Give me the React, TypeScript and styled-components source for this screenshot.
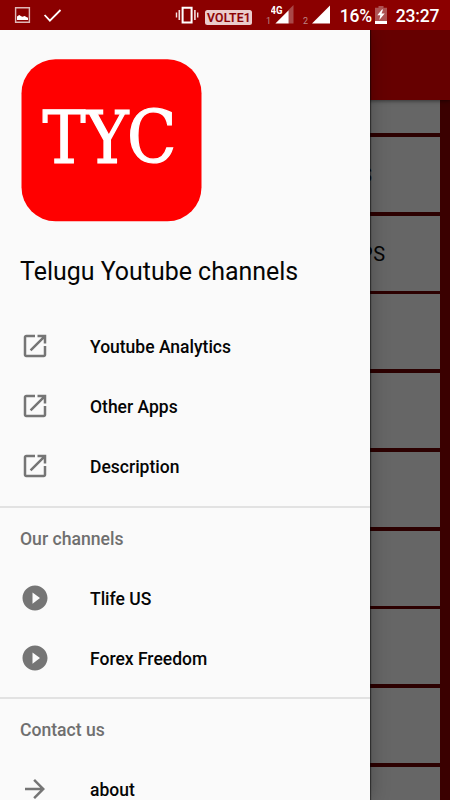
import React from "react";
import styled, { createGlobalStyle } from "styled-components";

const GlobalStyle = createGlobalStyle`
  *, *::before, *::after { box-sizing: border-box; }
  body { margin: 0; background: #3a0000; font-family: Roboto, sans-serif; }
`;

const Screen = styled.div`
  display: flex;
  flex-direction: column;
  width: 450px;
  height: 800px;
  overflow: hidden;
`;

const StatusBar = styled.header`
  display: flex;
  flex: none;
  justify-content: space-between;
  height: 30px;
  padding: 0 10px 0 13px;
  background: #8b0000;
  color: #fff;
`;

const StatusGroup = styled.div`
  display: flex;
  align-items: center;
`;

const Glyph = styled.svg<{ $gap?: number }>`
  display: block;
  flex: none;
  margin-left: ${({ $gap = 0 }) => $gap}px;
`;

const NetworkBadge = styled.span`
  width: 47px;
  height: 15px;
  margin: 5px 14px 0 6px;
  padding-left: 2px;
  border-radius: 2.5px;
  background: #ebcccc;
  color: #8b0000;
  font-size: 12.2px;
  font-weight: 500;
  letter-spacing: 0.25px;
  -webkit-text-stroke: 0.2px #8b0000;
  line-height: 16px;
  white-space: nowrap;
`;

const SimNumber = styled.span<{ $gap?: number }>`
  width: 5px;
  margin-left: ${({ $gap = 0 }) => $gap}px;
  padding-top: 12px;
  color: #bd8585;
  font-size: 9px;
  line-height: 9px;
`;

const StatusText = styled.span<{ $width: number; $gap: number }>`
  width: ${({ $width }) => $width}px;
  margin-left: ${({ $gap }) => $gap}px;
  padding-top: 2px;
  font-size: 17.5px;
  font-weight: 500;
  letter-spacing: -0.15px;
  line-height: 22px;
  white-space: nowrap;
`;

const Stage = styled.main`
  position: relative;
  flex: 1;
  min-height: 0;
  overflow: hidden;
  background: #3a0000;
`;

const AppBar = styled.div`
  position: relative;
  height: 70px;
  background: #660000;
  box-shadow: 0 1px 4px rgba(0, 0, 0, 0.5);
`;

const CardList = styled.div`
  display: flex;
  flex-direction: column;
  gap: 3.75px;
  width: 440px;
  margin-top: -41.9px;
  background: #2c0000;
`;

const Card = styled.div`
  display: flex;
  flex: none;
  align-items: center;
  justify-content: flex-end;
  height: 75px;
  background: #666;
  color: #050505;
  font-size: 20px;
`;

const CardLabel = styled.span<{ $inset: number }>`
  margin-right: ${({ $inset }) => $inset}px;
  padding-top: 2px;
  letter-spacing: 0.4px;
`;

const Drawer = styled.nav`
  position: absolute;
  inset: 0 auto 0 0;
  width: 370px;
  background: #fafafa;
  box-shadow: 0 0 1px 1px rgba(0, 0, 0, 0.45), 0 0 18px rgba(0, 0, 0, 0.3);
`;

const DrawerHeader = styled.div`
  height: 286px;
  padding: 29px 0 0 21px;
`;

const Title = styled.h1`
  margin: 34px 0 0 -1px;
  color: #050505;
  font-size: 24.94px;
  font-weight: 400;
  line-height: 32px;
  white-space: nowrap;
`;

const Section = styled.section<{ $divided?: boolean }>`
  padding-bottom: ${({ $divided }) => ($divided ? 9 : 10)}px;
  border-top: ${({ $divided }) => ($divided ? "2px solid #e2e2e2" : "none")};
`;

const SectionLabel = styled.h2`
  height: 60px;
  margin: 0;
  padding-left: 20px;
  color: #6f6f6f;
  font-size: 17.6px;
  font-weight: 500;
  line-height: 62px;
`;

const MenuItem = styled.a`
  display: flex;
  align-items: center;
  height: 60px;
  padding-left: 20px;
  color: #050505;
  font-size: 17.5px;
  font-weight: 500;
  line-height: 24px;
`;

const MenuIcon = styled.svg<{ $lift: number }>`
  display: block;
  flex: none;
  width: 30px;
  height: 30px;
  margin: 0 40px ${({ $lift }) => $lift}px 0;
  fill: #757575;
`;

const MenuText = styled.span`
  padding-top: 1.4px;
`;

const paths = {
  open: "M19 19H5V5h7V3H5c-1.11 0-2 .9-2 2v14c0 1.1.89 2 2 2h14c1.1 0 2-.9 2-2v-7h-2v7zM14 3v2h3.59l-9.83 9.83 1.41 1.41L19 6.41V10h2V3h-7z",
  play: "M12 2C6.48 2 2 6.48 2 12s4.48 10 10 10 10-4.48 10-10S17.52 2 12 2zm-2 14.5v-9l6 4.5-6 4.5z",
  arrow: "M12 4l-1.41 1.41L16.17 11H4v2h12.17l-5.58 5.59L12 20l8-8z",
};

const sections: { label?: string; icon: keyof typeof paths; items: string[] }[] = [
  { icon: "open", items: ["Youtube Analytics", "Other Apps", "Description"] },
  { label: "Our channels", icon: "play", items: ["Tlife US", "Forex Freedom"] },
  { label: "Contact us", icon: "arrow", items: ["about"] },
];

const cards = [
  { label: "", inset: 0 },
  { label: "S", inset: 67.8 },
  { label: "PS", inset: 54.6 },
  ...Array.from({ length: 7 }, () => ({ label: "", inset: 0 })),
];

function Status() {
  return (
    <StatusBar>
      <StatusGroup>
        <Glyph width="18" height="30" viewBox="0 0 18 30">
          <path d="M2.6 7.8h13.8v14.4H2.6z" fill="none" stroke="#dfb8b8" strokeWidth="1.4" />
          <path d="M4 20v-3.6l2.2-1.5 2 1.3 1.2.6 2.3-.9 1.6 1.1 1.7.8V20z" fill="#fff" />
        </Glyph>
        <Glyph width="20" height="30" viewBox="0 0 20 30" $gap={12}>
          <path d="M1.6 15l5.3 5.6L17.5 10" fill="none" stroke="#fff" strokeWidth="1.8" />
        </Glyph>
      </StatusGroup>
      <StatusGroup>
        <Glyph width="24" height="30" viewBox="0 0 24 30">
          <path d="M7.6 7.8h9v14.6h-9z" fill="none" stroke="#fff" strokeWidth="2" />
          <path d="M4.3 10v10M19.9 10v10" stroke="#f4dfdf" strokeWidth="1.6" />
          <path d="M1.5 12.5v5M22.7 12.5v5" stroke="#f4dfdf" strokeWidth="1.4" />
        </Glyph>
        <NetworkBadge>VOLTE1</NetworkBadge>
        <SimNumber>1</SimNumber>
        <Glyph width="24" height="30" viewBox="0 0 24 30">
          <path d="M22.5 5v18.5h-5V10z" fill="#a94848" />
          <path d="M4.4 23.5L17.6 10.3v13.2z" fill="#fff" />
          <text x="-0.6" y="13.6" fill="#fff" fontFamily="Roboto, sans-serif" fontSize="10.6" fontWeight="700" textLength="12" lengthAdjust="spacingAndGlyphs">4G</text>
        </Glyph>
        <SimNumber $gap={8}>2</SimNumber>
        <Glyph width="18" height="30" viewBox="0 0 18 30" $gap={3.7}>
          <path d="M0 23.5L18 5.5v18z" fill="#fff" />
        </Glyph>
        <StatusText $width={33} $gap={10}>16%</StatusText>
        <Glyph width="12" height="30" viewBox="0 0 12 30" $gap={2}>
          <path d="M3.5 6h5v1.8H12V24H0V7.8h3.5z" fill="#ae5353" />
          <path d="M0 21h12v3H0zM7 9.5L2.3 15.3h3L4.3 20 9.7 13.5H6.5L8 9.5z" fill="#fff" />
        </Glyph>
        <StatusText $width={44.3} $gap={9}>23:27</StatusText>
      </StatusGroup>
    </StatusBar>
  );
}

export default function App() {
  return (
    <>
      <GlobalStyle />
      <Screen>
        <Status />
        <Stage>
          <AppBar />
          <CardList>
            {cards.map((card, index) => (
              <Card key={index}>
                <CardLabel $inset={card.inset}>{card.label}</CardLabel>
              </Card>
            ))}
          </CardList>
          <Drawer>
            <DrawerHeader>
              <Glyph width="181" height="163" viewBox="0 0 181 163">
                <rect x="0.5" y="0.3" width="180" height="162" rx="34" fill="#f00" />
                <text x="21.6" y="104.3" fill="#fff" stroke="#fff" strokeWidth="1.2" fontFamily="'DejaVu Serif Condensed', 'DejaVu Serif', serif" fontSize="72" textLength="134" lengthAdjust="spacingAndGlyphs">TYC</text>
              </Glyph>
              <Title>Telugu Youtube channels</Title>
            </DrawerHeader>
            {sections.map((section, index) => (
              <Section key={index} $divided={index > 0}>
                {section.label && <SectionLabel>{section.label}</SectionLabel>}
                {section.items.map((item) => (
                  <MenuItem key={item}>
                    <MenuIcon viewBox="0 0 24 24" $lift={index > 0 ? 1 : 0}>
                      <path d={paths[section.icon]} />
                    </MenuIcon>
                    <MenuText>{item}</MenuText>
                  </MenuItem>
                ))}
              </Section>
            ))}
          </Drawer>
        </Stage>
      </Screen>
    </>
  );
}
